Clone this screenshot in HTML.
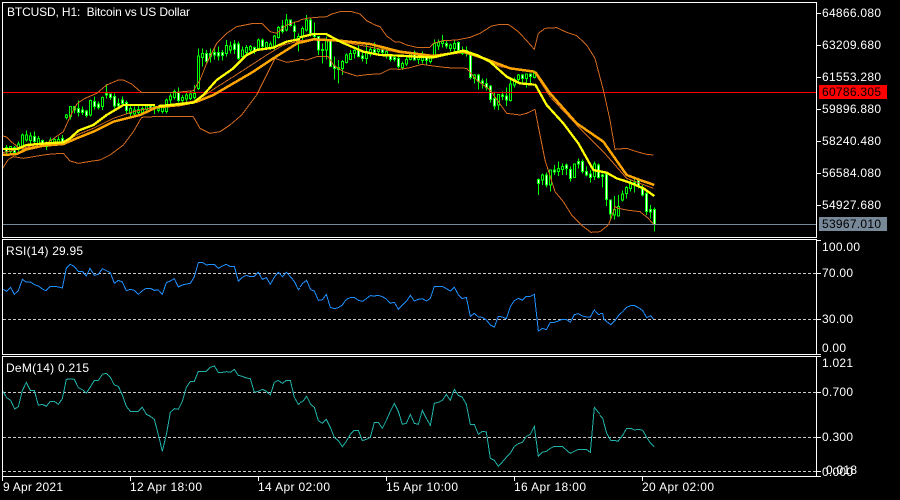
<!DOCTYPE html>
<html><head><meta charset="utf-8"><title>BTCUSD H1</title>
<style>
html,body{margin:0;padding:0;background:#000;width:900px;height:500px;overflow:hidden}
svg{display:block}
text{font-family:"Liberation Sans",sans-serif;font-size:12px;fill:#fff;white-space:pre}
.l{fill:none;shape-rendering:crispEdges}
.c{vector-effect:non-scaling-stroke;stroke-width:1;stroke:#0f0;shape-rendering:crispEdges}
.a{stroke:#d2691e;stroke-width:3;fill:none;stroke-linejoin:round;shape-rendering:crispEdges}
.y{stroke:#ff0;stroke-width:7;fill:none;stroke-linejoin:round;shape-rendering:crispEdges}
.o{stroke:#ffa500;stroke-width:7.5;fill:none;stroke-linejoin:round;shape-rendering:crispEdges}
.i{stroke-width:3;fill:none;shape-rendering:crispEdges}
</style></head><body>
<svg width="900" height="500" viewBox="0 0 900 500" xmlns="http://www.w3.org/2000/svg">
<rect width="900" height="500" fill="#000"/>

<!-- candles: wicks -->
<g transform="scale(1 .33333)" fill="none">
<path class="c" fill="none" d="M6.5 435V465M10.5 438V462M14.5 438V465M18.5 425V455M22.5 400V450M26.5 392V425M30.5 398V430M34.5 395V430M38.5 408V435M42.5 418V440M46.5 425V450M50.5 412V440M54.5 412V435M58.5 410V435M62.5 405V432M66.5 342V358M70.5 318V358M74.5 318V340M78.5 302V350M82.5 320V345M86.5 330V352M90.5 298V350M94.5 290V328M98.5 305V328M102.5 290V330M106.5 252V295M110.5 280V300M114.5 280V325M118.5 295V325M122.5 290V320M126.5 302V340M130.5 315V348M134.5 320V348M138.5 318V345M142.5 320V345M146.5 315V335M150.5 315V335M154.5 320V342M158.5 322V338M162.5 315V340M166.5 295V340M170.5 280V310M174.5 268V298M178.5 262V308M182.5 285V312M186.5 278V305M190.5 275V300M194.5 255V298M198.5 145V270M202.5 145V200M206.5 150V192M210.5 145V188M214.5 145V178M218.5 140V182M222.5 150V182M226.5 120V170M230.5 125V160M234.5 120V162M238.5 125V180M242.5 140V178M246.5 135V165M250.5 135V160M254.5 140V162M258.5 115V150M262.5 115V145M266.5 125V148M270.5 125V150M274.5 105V150M278.5 78V115M282.5 60V100M286.5 42V95M290.5 58V80M294.5 65V120M298.5 100V155M302.5 80V120M306.5 45V95M310.5 55V110M314.5 68V120M318.5 110V165M322.5 130V190M326.5 110V178M330.5 120V200M334.5 170V238M338.5 180V250M342.5 180V225M346.5 160V190M350.5 150V180M354.5 142V175M358.5 135V172M362.5 150V185M366.5 135V192M370.5 140V170M374.5 128V165M378.5 145V165M382.5 140V165M386.5 150V175M390.5 165V185M394.5 165V185M398.5 170V205M402.5 185V210M406.5 170V198M410.5 155V182M414.5 152V182M418.5 165V192M422.5 155V190M426.5 165V195M430.5 165V190M434.5 118V172M438.5 118V150M442.5 105V142M446.5 122V145M450.5 130V155M454.5 120V155M458.5 125V155M462.5 140V165M466.5 140V170M470.5 155V238M474.5 222V250M478.5 222V268M482.5 235V265M486.5 235V272M490.5 255V308M494.5 275V328M498.5 282V330M502.5 275V300M506.5 262V318M510.5 240V305M514.5 232V262M518.5 222V250M522.5 222V252M526.5 220V262M530.5 220V250M534.5 212V235"/>
<path class="c" fill="#000" d="M9.5 440h2V455h-2zM17.5 432h2V448h-2zM21.5 405h2V445h-2zM25.5 405h2V420h-2zM29.5 408h2V422h-2zM37.5 415h2V430h-2zM45.5 428h2V440h-2zM49.5 420h2V432h-2zM53.5 418h2V428h-2zM57.5 418h2V430h-2zM65.5 345h2V352h-2zM69.5 320h2V350h-2zM89.5 302h2V345h-2zM101.5 292h2V320h-2zM129.5 325h2V340h-2zM133.5 330h2V342h-2zM137.5 328h2V338h-2zM141.5 325h2V338h-2zM145.5 318h2V328h-2zM153.5 320h2V325h-2zM157.5 325h2V332h-2zM161.5 320h2V335h-2zM165.5 300h2V335h-2zM169.5 288h2V300h-2zM173.5 275h2V292h-2zM181.5 292h2V302h-2zM185.5 285h2V297h-2zM189.5 282h2V295h-2zM193.5 280h2V292h-2zM197.5 168h2V265h-2zM201.5 160h2V172h-2zM225.5 137h2V160h-2zM229.5 138h2V150h-2zM241.5 150h2V170h-2zM245.5 142h2V158h-2zM249.5 140h2V150h-2zM257.5 120h2V145h-2zM265.5 128h2V143h-2zM269.5 132h2V145h-2zM273.5 108h2V140h-2zM277.5 82h2V112h-2zM285.5 60h2V90h-2zM297.5 110h2V130h-2zM301.5 85h2V110h-2zM305.5 60h2V90h-2zM325.5 122h2V150h-2zM337.5 202h2V208h-2zM341.5 185h2V205h-2zM345.5 165h2V188h-2zM349.5 160h2V178h-2zM353.5 152h2V160h-2zM365.5 155h2V175h-2zM369.5 148h2V162h-2zM377.5 148h2V155h-2zM385.5 155h2V165h-2zM401.5 190h2V202h-2zM405.5 178h2V192h-2zM409.5 162h2V178h-2zM417.5 170h2V178h-2zM421.5 170h2V182h-2zM429.5 172h2V185h-2zM433.5 130h2V165h-2zM437.5 128h2V138h-2zM441.5 125h2V130h-2zM449.5 135h2V145h-2zM453.5 130h2V145h-2zM473.5 225h2V235h-2zM497.5 283h2V315h-2zM509.5 252h2V302h-2zM513.5 238h2V255h-2zM517.5 225h2V238h-2zM525.5 222h2V235h-2zM533.5 220h2V232h-2z"/>
<path class="c" fill="#fff" d="M5.5 442h2V456h-2zM13.5 442h2V458h-2zM33.5 410h2V425h-2zM41.5 422h2V433h-2zM61.5 415h2V428h-2zM73.5 320h2V330h-2zM77.5 325h2V338h-2zM81.5 330h2V338h-2zM85.5 333h2V346h-2zM93.5 305h2V320h-2zM97.5 312h2V322h-2zM105.5 280h2V285h-2zM109.5 282h2V292h-2zM113.5 290h2V318h-2zM117.5 310h2V318h-2zM121.5 300h2V310h-2zM125.5 308h2V332h-2zM149.5 318h2V325h-2zM177.5 278h2V302h-2zM205.5 160h2V185h-2zM209.5 160h2V170h-2zM213.5 158h2V165h-2zM217.5 158h2V168h-2zM221.5 157h2V167h-2zM233.5 132h2V148h-2zM237.5 132h2V175h-2zM253.5 142h2V155h-2zM261.5 120h2V140h-2zM281.5 78h2V95h-2zM289.5 60h2V77h-2zM293.5 78h2V95h-2zM309.5 60h2V100h-2zM313.5 100h2V110h-2zM317.5 110h2V150h-2zM321.5 148h2V152h-2zM329.5 122h2V200h-2zM333.5 198h2V205h-2zM357.5 152h2V170h-2zM361.5 168h2V175h-2zM373.5 148h2V158h-2zM381.5 148h2V158h-2zM389.5 168h2V178h-2zM393.5 172h2V178h-2zM397.5 175h2V200h-2zM413.5 158h2V180h-2zM425.5 172h2V182h-2zM445.5 130h2V138h-2zM457.5 128h2V152h-2zM461.5 152h2V160h-2zM465.5 152h2V160h-2zM469.5 165h2V232h-2zM477.5 225h2V245h-2zM481.5 243h2V250h-2zM485.5 250h2V262h-2zM489.5 258h2V298h-2zM493.5 295h2V318h-2zM501.5 285h2V290h-2zM505.5 288h2V300h-2zM521.5 225h2V235h-2zM529.5 222h2V230h-2z"/>
</g>
<g transform="translate(0 60) scale(1 .33333)" fill="none">
<path class="c" fill="none" d="M538.5 355V405M542.5 340V375M546.5 338V382M550.5 328V395M554.5 315V345M558.5 305V348M562.5 310V345M566.5 310V345M570.5 320V365M574.5 310V352M578.5 295V325M582.5 298V340M586.5 320V350M590.5 330V368M594.5 305V360M598.5 310V355M602.5 340V382M606.5 340V438M610.5 418V478M614.5 408V478M618.5 405V470M622.5 392V425M626.5 378V415M630.5 360V395M634.5 350V398M638.5 355V385M642.5 375V410M646.5 395V465M650.5 435V475M654.5 442V515"/>
<path class="c" fill="#000" d="M541.5 345h2V360h-2zM549.5 330h2V375h-2zM557.5 325h2V335h-2zM561.5 320h2V328h-2zM573.5 312h2V352h-2zM593.5 312h2V350h-2zM613.5 448h2V465h-2zM617.5 440h2V468h-2zM621.5 402h2V420h-2zM625.5 382h2V400h-2zM629.5 370h2V385h-2z"/>
<path class="c" fill="#fff" d="M537.5 358h2V370h-2zM545.5 345h2V375h-2zM553.5 330h2V336h-2zM565.5 315h2V325h-2zM569.5 328h2V355h-2zM577.5 305h2V312h-2zM581.5 305h2V335h-2zM585.5 335h2V345h-2zM589.5 342h2V352h-2zM597.5 315h2V352h-2zM601.5 345h2V350h-2zM605.5 342h2V418h-2zM609.5 420h2V462h-2zM633.5 368h2V375h-2zM637.5 362h2V378h-2zM641.5 385h2V405h-2zM645.5 400h2V455h-2zM649.5 448h2V456h-2zM653.5 448h2V494h-2z"/>
</g>

<!-- red and grey lines -->
<rect x="3" y="92" width="813" height="1" fill="#f00"/>
<rect x="3" y="224" width="813" height="1" fill="#778899"/>

<!-- Bollinger bands -->
<g transform="scale(.33333)">
<path class="a" d="M8 408L20 411L32 424L44 433L56 445L70 447L90 437L110 435L140 430L190 395L215 340L232 310L255 295L290 280L320 255L355 240L370 240L395 252L425 278L470 278L520 278L580 272L600 240L620 190L650 130L680 100L710 80L760 70L785 70L810 95L830 100L860 75L900 62"/>
<path class="a" d="M8 505L25 478L40 470L70 475L100 470L130 465L155 462L190 460L210 483L235 490L265 485L300 480L330 465L370 435L400 395L425 352L460 350L520 350L580 350L600 385L630 400L660 395L690 375L725 345L770 285L800 225L825 175L860 187L900 180"/>
<path class="a" d="M8 458L80 442L190 430L230 405L280 385L340 355L400 335L470 320L590 302L640 268L700 230L800 165L850 135L900 122"/>
</g>
<g transform="translate(300 0) scale(.33333)">
<path class="a" d="M0 60L20 55L50 52L80 50L95 42L120 35L155 35L180 42L200 62L225 75L240 80L260 108L285 126L300 126L320 135L350 142L390 142L400 130L430 122L470 120L510 112L540 100L575 78L600 73L625 73L655 95L680 122L703 148L715 100L735 85L770 83L800 97L830 107L860 135L885 175L900 232"/>
<path class="a" d="M0 178L20 180L50 170L85 170L100 195L130 215L170 228L210 223L240 222L270 207L300 208L330 203L365 193L400 198L440 203L500 205L530 240L570 270L620 340L660 345"/>
<path class="a" d="M0 122L50 118L100 118L150 130L300 158L400 170L500 155L560 180L600 200L703 215"/>
</g>
<g transform="translate(520 60) scale(.33333)">
<path class="a" d="M240 52L250 90L270 180L285 268L320 265L350 275L380 283L400 285"/>
<path class="a" d="M0 165L20 160L45 148L55 200L75 300L105 395L130 425L155 465L190 500L213 517L240 515L265 495L275 470L285 440L295 445L320 450L360 455L385 475L400 492"/>
<path class="a" d="M45 40L90 110L170 195L250 275L320 355L400 385"/>
<!-- moving averages -->
<path class="o" d="M45 35L90 100L170 190L250 245L320 345L360 360L403 375"/>
<path class="y" d="M45 72L80 135L130 190L175 250L220 330L260 338L290 355L330 368L370 385L403 408"/>
</g>
<g transform="scale(.33333)">
<path class="o" d="M8 465L50 462L80 448L130 437L190 432L230 415L280 395L340 365L420 345L470 322L540 315L590 305L640 285L700 250L760 215L820 175L860 150L900 125"/>
<path class="y" d="M8 447L50 447L80 435L140 430L190 427L210 415L235 392L280 375L320 345L370 315L465 315M475 318L500 316L580 308L610 285L650 240L700 205L740 165L770 150L820 143L860 125L900 117"/>
</g>
<g transform="translate(300 0) scale(.33333)">
<path class="o" d="M0 128L40 118L120 122L210 132L300 155L400 168L490 155L560 178L630 205L703 215"/>
<path class="y" d="M0 112L40 102L78 102L125 127L190 155L240 165L300 167L350 170L400 172L440 163L490 152L530 165L570 185L620 230L660 250L703 254"/>
</g>

<!-- dashed levels -->
<g stroke="#c8c8c8" stroke-width="1" stroke-dasharray="3 2" shape-rendering="crispEdges">
<path d="M3 273.5H816M3 319.5H816M3 392.5H816M3 437.5H816M3 471.5H816"/>
</g>

<!-- RSI -->
<g stroke="#1e90ff" class="i">
<path transform="translate(0 220) scale(.33333)" d="M10 208L20 214L32 202L43 223L55 212L67 178L78 186L91 186L103 194L115 198L127 207L138 212L151 199L163 199L175 201L187 204L199 145L211 133L223 140L235 154L247 154L259 168L270 145L283 166L295 163L307 146L319 152L331 158L343 190L355 181L367 186L379 212L391 208L403 211L415 223L427 212L439 205L451 205L463 211L475 210L487 223L499 188L511 183L523 176L535 201L547 195L559 192L571 190L583 170L595 128L607 127L619 135L631 133L643 133L655 145L667 138L679 133L691 140L703 139L715 184L727 172L739 166L751 170L763 169L775 157L787 178L799 173L811 193L823 171L835 157L847 170L859 157L871 170L883 184L895 209L900 204"/>
<path transform="translate(300 220) scale(.33333)" d="M0 201L8 190L20 181L32 209L43 213L55 241L67 239L79 223L91 262L103 266L115 263L127 255L139 238L151 233L163 232L175 241L187 244L199 236L211 227L223 228L235 226L247 230L259 237L271 250L283 247L295 268L307 256L319 244L331 226L343 243L355 238L367 236L379 243L391 235L403 199L415 199L427 199L439 206L451 213L463 202L475 224L487 236L499 232L511 289L523 280L535 291L547 292L559 300L571 315L583 321L595 289L607 291L619 296L631 260L643 242L655 235L667 241L679 229L691 229L703 223L715 333L727 325L739 329L751 307L763 307L775 303L787 298L799 298L811 307L823 284L835 281L847 288L859 291L871 291L883 270L895 283L900 284"/>
<path transform="translate(600 220) scale(.33333)" d="M0 281L8 281L11 296L20 305L32 314L44 303L56 286L68 275L80 262L92 257L104 257L116 263L128 272L140 293L152 287L160 297"/>
</g>

<!-- DeM -->
<g stroke="#20b2aa" class="i">
<path transform="translate(0 350) scale(.33333)" d="M10 125L20 143L32 151L44 177L55 170L67 122L79 97L91 121L103 121L115 166L127 163L139 169L151 154L163 154L175 163L187 146L199 88L211 87L223 88L235 113L247 119L259 129L271 111L283 91L295 91L307 73L319 70L331 82L343 105L355 109L367 135L379 169L391 184L403 184L415 184L427 172L439 193L451 199L463 208L475 254L487 304L499 254L511 187L523 176L535 178L547 154L559 112L571 94L583 94L595 64L607 64L619 64L631 52L643 48L655 67L667 67L679 65L691 67L703 58L715 76L727 79L739 84L751 86L763 127L775 124L787 118L799 124L811 135L823 97L835 91L847 100L859 91L871 91L883 142L895 163L900 160"/>
<path transform="translate(300 350) scale(.33333)" d="M0 157L8 155L20 139L32 163L43 172L55 212L67 220L79 208L91 232L103 262L115 272L127 290L139 274L151 253L163 241L175 241L187 272L199 268L211 262L223 217L235 217L247 235L259 211L271 184L283 160L295 184L307 223L319 220L331 193L343 220L355 223L367 181L379 205L391 226L403 160L415 157L427 151L439 133L451 151L463 118L475 136L487 142L499 163L511 223L523 223L535 253L547 244L559 246L571 325L583 331L595 349L607 336L619 322L631 310L643 289L655 281L667 277L679 259L691 253L703 229L715 319L727 307L739 304L751 295L763 289L775 289L787 289L799 300L811 310L823 304L835 298L847 298L859 298L871 307L883 172L895 187L900 193"/>
<path transform="translate(600 350) scale(.33333)" d="M0 196L8 205L20 250L32 271L44 271L54 274L68 256L80 235L92 235L104 240L116 238L128 241L140 262L152 280L162 290"/>
</g>

<!-- frames and ticks -->
<g fill="none" stroke="#fff" stroke-width="1" shape-rendering="crispEdges">
<rect x="2.5" y="2.5" width="814" height="235"/>
<rect x="2.5" y="239.5" width="814" height="115"/>
<rect x="2.5" y="356.5" width="814" height="120"/>
<path d="M816 13.5h5M816 45.5h5M816 77.5h5M816 109.5h5M816 141.5h5M816 173.5h5M816 205.5h5M816 240.5h5M816 273.5h5M816 319.5h5M816 354.5h5M816 356.5h5M816 392.5h5M816 437.5h5M816 471.5h5M816 476.5h5"/>
<path d="M2.5 477v4M130.5 477v4M258.5 477v4M386.5 477v4M514.5 477v4M642.5 477v4"/>
</g>

<!-- price tags -->
<rect x="819" y="85" width="68" height="14" fill="#f00"/>
<rect x="819" y="217" width="68" height="14" fill="#778899"/>

<!-- labels -->
<text x="7" y="16" textLength="183" lengthAdjust="spacing">BTCUSD, H1:  Bitcoin vs US Dollar</text>
<text x="6" y="255" textLength="77" lengthAdjust="spacing">RSI(14) 29.95</text>
<text x="6" y="372" textLength="83" lengthAdjust="spacing">DeM(14) 0.215</text>
<g>
<text x="822" y="17" textLength="59" lengthAdjust="spacing">64866.080</text>
<text x="822" y="49" textLength="59" lengthAdjust="spacing">63209.680</text>
<text x="822" y="81" textLength="59" lengthAdjust="spacing">61553.280</text>
<text x="822" y="113" textLength="59" lengthAdjust="spacing">59896.880</text>
<text x="822" y="145" textLength="59" lengthAdjust="spacing">58240.480</text>
<text x="822" y="177" textLength="59" lengthAdjust="spacing">56584.080</text>
<text x="822" y="209" textLength="59" lengthAdjust="spacing">54927.680</text>
<text x="822" y="96" textLength="59" lengthAdjust="spacing" style="fill:#000">60786.305</text>
<text x="822" y="228" textLength="59" lengthAdjust="spacing" style="fill:#000">53967.010</text>
<text x="822" y="251" textLength="38" lengthAdjust="spacing">100.00</text>
<text x="822" y="277" textLength="31" lengthAdjust="spacing">70.00</text>
<text x="822" y="323" textLength="31" lengthAdjust="spacing">30.00</text>
<text x="822" y="352" textLength="24" lengthAdjust="spacing">0.00</text>
<text x="822" y="367" textLength="31" lengthAdjust="spacing">1.021</text>
<text x="822" y="396" textLength="31" lengthAdjust="spacing">0.700</text>
<text x="822" y="441" textLength="31" lengthAdjust="spacing">0.300</text>
<text x="826" y="474" textLength="31" lengthAdjust="spacing">0.018</text>
<text x="822" y="476" textLength="31" lengthAdjust="spacing">0.000</text>
<text x="3" y="491" textLength="60" lengthAdjust="spacing">9 Apr 2021</text>
<text x="130" y="491" textLength="72" lengthAdjust="spacing">12 Apr 18:00</text>
<text x="258" y="491" textLength="72" lengthAdjust="spacing">14 Apr 02:00</text>
<text x="386" y="491" textLength="72" lengthAdjust="spacing">15 Apr 10:00</text>
<text x="514" y="491" textLength="72" lengthAdjust="spacing">16 Apr 18:00</text>
<text x="642" y="491" textLength="72" lengthAdjust="spacing">20 Apr 02:00</text>
</g>
</svg>
</body></html>
